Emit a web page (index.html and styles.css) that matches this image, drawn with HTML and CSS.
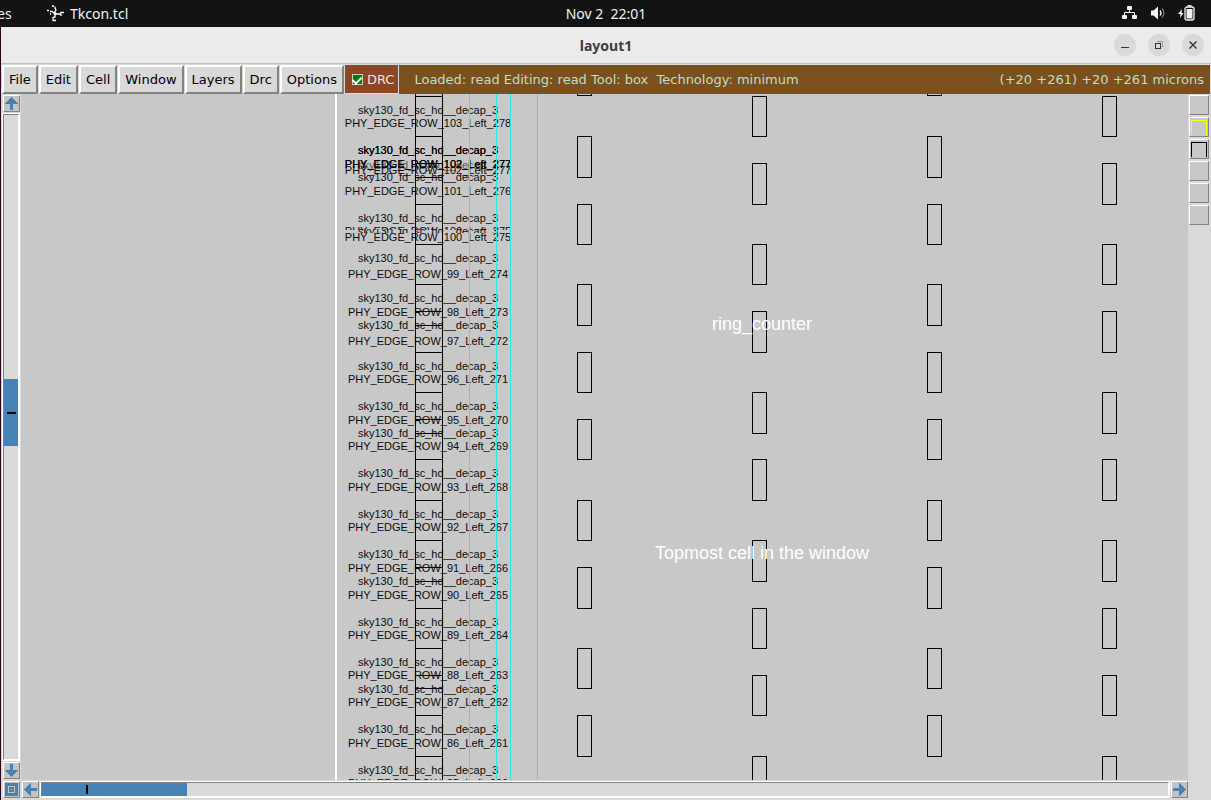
FILE: index.html
```html
<!DOCTYPE html>
<html lang="en">
<head>
<meta charset="utf-8">
<title>layout1</title>
<link rel="stylesheet" href="styles.css">
</head>
<body>
<header class="topbar">
  <nav class="topbar-left">
    <span class="activities">es</span>
    <svg class="app-icon" width="17" height="17" viewBox="0 0 17 17" fill="none" stroke="#fff" stroke-width="1.3"><path d="M0 5.500h2M3 6.500h2l2 1.500M7 8l2-3-1-2V1.500M8 9v3l-2 .5v3h3M9 9h4l1-1.500h3M14 9v2M5 1h2M3 9h1"/><circle cx="8" cy="8.500" r="1.500" fill="#fff" stroke="none"/></svg>
    <span>Tkcon.tcl</span>
  </nav>
  <time class="clock">Nov 2&nbsp; 22:01</time>
  <div class="tray">
    <svg width="16" height="14" viewBox="0 0 16 14"><g fill="#f2f2f2"><rect x="5" y="0" width="5" height="4" rx="1"/><rect x="0" y="9" width="5" height="4" rx="1"/><rect x="10" y="9" width="5" height="4" rx="1"/></g><path d="M7.500 4v3M2.500 9V6.500h10V9" fill="none" stroke="#f2f2f2"/></svg>
    <svg width="16" height="14" viewBox="0 0 16 14"><path d="M1 4.500h2.500L8 .5v13L3.500 9.500H1z" fill="#f2f2f2"/><path d="M10 4.500q2 2.500 0 5" fill="none" stroke="#f2f2f2" stroke-width="1.300"/><path d="M12 2.500q4 4.500 0 9" fill="none" stroke="#777" stroke-width="1.200"/></svg>
    <svg width="17" height="16" viewBox="0 0 17 16"><path d="M4 4L0 9h2.500L2 13l3.500-5H3.500z" fill="#f2f2f2"/><rect x="7" y="2" width="9" height="13" rx="2" fill="none" stroke="#f2f2f2" stroke-width="1.300"/><rect x="8.500" y="4" width="6" height="9.500" fill="#f2f2f2"/><path d="M9.500.8h4" stroke="#f2f2f2" stroke-width="1.500"/></svg>
  </div>
</header>

<main class="window">
  <div class="titlebar">
    <h1 class="title">layout1</h1>
    <div class="win-buttons">
      <button class="win-btn" aria-label="Minimize"><svg width="10" height="10"><path d="M1 7.500h8" stroke="#333"/></svg></button>
      <button class="win-btn" aria-label="Restore"><svg width="10" height="10" fill="none"><path d="M3 1.500h5.500V7" stroke="#999"/><rect x="1.500" y="3.500" width="5" height="5" stroke="#333"/></svg></button>
      <button class="win-btn" aria-label="Close"><svg width="10" height="10"><path d="M1.500 1.500l7 7M8.500 1.500l-7 7" stroke="#333" stroke-width="1.400"/></svg></button>
    </div>
  </div>

  <div class="menubar">
    <button class="menu">File</button>
    <button class="menu">Edit</button>
    <button class="menu">Cell</button>
    <button class="menu">Window</button>
    <button class="menu">Layers</button>
    <button class="menu">Drc</button>
    <button class="menu">Options</button>
    <label class="drc"><input class="drc-box" type="checkbox" checked>DRC</label>
    <div class="status"><span class="message">Loaded: read Editing: read Tool: box&nbsp; Technology: minimum</span><span>(+20 +261) +20 +261 microns</span></div>
  </div>

  <div class="work">
    <div class="vscroll">
      <button class="arrow" aria-label="Scroll up"><svg width="13" height="13" shape-rendering="crispEdges"><path d="M6.500 0L13 7H8v6H5V7H0z"/></svg></button>
      <div class="vtrack"><div class="vthumb"></div></div>
      <button class="arrow" aria-label="Scroll down"><svg width="13" height="13" shape-rendering="crispEdges"><path d="M6.500 13L13 6H8V0H5v6H0z"/></svg></button>
    </div>
    <svg class="canvas" id="canvas" role="img" aria-label="Chip layout"></svg>
    <div class="layers">
      <button class="layer" aria-label="Layer 1"></button>
      <button class="layer" aria-label="Layer 2"><span class="swatch yellow"></span></button>
      <button class="layer" aria-label="Layer 3"><span class="swatch black"></span></button>
      <button class="layer" aria-label="Layer 4"></button>
      <button class="layer" aria-label="Layer 5"></button>
      <button class="layer" aria-label="Layer 6"></button>
    </div>
  </div>

  <div class="hscroll">
    <button class="arrow" aria-label="Full view"><svg width="13" height="13" shape-rendering="crispEdges"><path d="M0 0h13v13H0zM3 3v7h7V3z" fill-rule="evenodd"/><path d="M4 4h5v5H4zM6 6v1h1V6z" fill-rule="evenodd"/></svg></button>
    <button class="arrow" aria-label="Scroll left"><svg width="13" height="13" shape-rendering="crispEdges"><path d="M0 6.500L7 0v5h6v3H7v5z"/></svg></button>
    <div class="htrack"><div class="hthumb"></div></div>
    <button class="arrow" aria-label="Scroll right"><svg width="13" height="13" shape-rendering="crispEdges"><path d="M13 6.500L6 0v5H0v3h6v5z"/></svg></button>
  </div>
</main>
<script src="layout.js"></script>
</body>
</html>
```

FILE: styles.css
```css
* { box-sizing: border-box; }
html, body { height: 100%; }
body {
  margin: 0;
  display: flex;
  flex-direction: column;
  background: #2c001e;
  font-family: "DejaVu Sans", sans-serif;
  overflow: hidden;
}
button { font: inherit; color: inherit; margin: 0; }

.topbar {
  flex: none;
  display: grid;
  grid-template-columns: 1fr auto 1fr;
  align-items: center;
  height: 27px;
  padding: 0 16px 1px 0;
  background: #131313;
  color: #f2f2f2;
  font: 14px "Noto Sans", sans-serif;
}
.topbar-left { display: flex; align-items: center; }
.activities { width: 47px; margin-left: -3px; }
.app-icon { margin: 0 6px 0 3px; }
.clock { padding-left: 17px; }
.tray { display: flex; justify-content: flex-end; align-items: center; gap: 12px; }

.window {
  flex: 1;
  min-height: 0;
  margin-left: 1px;
  display: flex;
  flex-direction: column;
  background: #d9d9d9;
}
.titlebar {
  flex: none;
  display: grid;
  grid-template-columns: 1fr auto 1fr;
  align-items: center;
  height: 37px;
  padding: 0 7px;
  background: #ebebeb;
  border-bottom: 1px solid #bfbfbf;
}
.title {
  grid-column: 2;
  margin: 0;
  font: bold 14px "Noto Sans", sans-serif;
  color: #3d3d3d;
}
.win-buttons { display: flex; justify-content: flex-end; gap: 12px; }
.win-btn {
  display: flex;
  align-items: center;
  justify-content: center;
  width: 22px;
  height: 22px;
  padding: 0;
  border: 0;
  border-radius: 50%;
  background: #d9d9d9;
}

.menubar {
  flex: none;
  display: flex;
  height: 30px;
  padding: 1px 1px 0;
  font-size: 13px;
}
.menu {
  height: 29px;
  margin-right: 1px;
  padding: 0 5px;
  border: 2px solid;
  border-color: #fff #828282 #828282 #fff;
  background: #d9d9d9;
  color: #000;
  white-space: nowrap;
}
.drc {
  display: flex;
  align-items: center;
  gap: 4px;
  padding: 0 4px 0 7px;
  border: 1px solid #d9d9d9;
  border-width: 0 1px 1px 0;
  background: #8b4726;
  color: #e6e6dc;
}
.drc-box {
  appearance: none;
  display: grid;
  place-items: center;
  width: 11px;
  height: 11px;
  margin: 0;
  border: 1px solid #cfc7b8;
  background: #008000;
}
.drc-box::after {
  content: "";
  width: 4px;
  height: 7px;
  margin-bottom: 2px;
  border: solid #fff;
  border-width: 0 2px 2px 0;
  transform: rotate(45deg);
}
.status {
  flex: 1;
  display: flex;
  align-items: center;
  justify-content: space-between;
  padding: 0 6px 0 15px;
  background: #7a501c;
  color: #c3dcc8;
  white-space: nowrap;
}

.work { flex: 1; min-height: 0; display: flex; }
.vscroll {
  flex: none;
  display: flex;
  flex-direction: column;
  width: 20px;
  padding: 1px 0 1px 2px;
}
.arrow {
  flex: none;
  display: block;
  width: 17px;
  height: 17px;
  padding: 0;
  border: 1px solid;
  border-color: #fff #828282 #828282 #fff;
  background: #c3c3c3;
  line-height: 0;
}
.arrow svg { margin: 1px; fill: #4682b4; }
.vtrack {
  flex: 1;
  display: flex;
  flex-direction: column;
  width: 16px;
  margin: 2px 0;
  border: 1px solid;
  border-color: #828282 #fff #fff #828282;
  outline: 1px solid #fff;
}
.vtrack::before { content: ""; flex: 264; }
.vtrack::after { content: ""; flex: 313; }
.vthumb {
  flex: 67;
  display: flex;
  align-items: center;
  justify-content: center;
  background: #4682b4;
}
.vthumb::after { content: ""; width: 9px; height: 2px; background: #000; }
.canvas {
  flex: 1;
  min-width: 0;
  height: 100%;
  background: #c8c8c8;
  overflow: hidden;
}
.cells { fill: none; stroke: #000; shape-rendering: crispEdges; }
.rails { fill: none; stroke: #28e8e0; shape-rendering: crispEdges; }
.boundary { stroke: #fff; stroke-width: 2px; shape-rendering: crispEdges; }
.cell-text {
  fill: #0c0c0c;
  font: 11px "Liberation Sans", sans-serif;
  text-anchor: middle;
}
.strong { fill: #000; }
.faint { opacity: 0.6; }
.cell-title {
  fill: #fff;
  font: 18px "Liberation Sans", sans-serif;
  text-anchor: middle;
}

.layers {
  flex: none;
  display: flex;
  flex-direction: column;
  gap: 2px;
  width: 23px;
  padding: 1px 1px 0;
}
.layer {
  display: flex;
  width: 20px;
  height: 20px;
  padding: 2px 1px 1px;
  border: 1px solid;
  border-color: #fff #828282 #828282 #fff;
  background: #c8c8c8;
}
.swatch { flex: 1; align-self: stretch; border: 1px solid; border-bottom: 0; }
.yellow { border-color: #ff0; }
.black { border-color: #000; }

.hscroll {
  flex: none;
  display: flex;
  gap: 2px;
  height: 20px;
  padding: 1px 23px 0 2px;
}
.htrack {
  flex: 1;
  display: flex;
  height: 15px;
  margin-top: 1px;
  border: 1px solid;
  border-color: #828282 #fff #fff #828282;
  outline: 1px solid #fff;
}
.hthumb {
  flex: 145;
  display: flex;
  align-items: center;
  background: #4682b4;
}
.hthumb::after { content: ""; width: 2px; height: 9px; margin-left: 44px; background: #000; }
.htrack::after { content: ""; flex: 982; }
```

FILE: layout.js
```js
const NS = "http://www.w3.org/2000/svg";
const canvas = document.getElementById("canvas");

function add(parent, tag, attrs, text) {
  const node = document.createElementNS(NS, tag);
  for (const key in attrs) node.setAttribute(key, attrs[key]);
  if (text) node.textContent = text;
  parent.appendChild(node);
  return node;
}

// Cell edges, measured from the top of the canvas.
const edges = [2, 42, 69, 83, 110, 150, 190, 217, 231, 258, 298, 325, 339, 365, 406, 446, 473, 487, 514, 554, 581, 594, 621, 662];
const rowBaselines = [33, 101, 147, 184, 222, 251, 289, 330, 356, 397, 437, 478, 505, 545, 585, 612, 653, 693];
const cellBaselines = [20, 87, 128, 168, 208, 235, 276, 316, 343, 383, 424, 464, 491, 532, 572, 599, 639, 680];
const tapsA = [[-39, 1], [42, 83], [110, 150], [190, 231], [258, 298], [325, 365], [406, 446], [473, 514], [554, 594], [621, 662]];
const tapsB = [[2, 42], [69, 110], [150, 190], [217, 258], [298, 339], [365, 406], [446, 487], [514, 554], [581, 621], [662, 702]];
const CELL = "sky130_fd_sc_hd__decap_3";

const defs = add(canvas, "defs", {});
const clip = add(defs, "clipPath", { id: "sliver" });
add(clip, "rect", { x: 316, y: 133, width: 190, height: 3 });
const clipLow = add(defs, "clipPath", { id: "sliver-low" });
add(clipLow, "rect", { x: 316, y: 135, width: 190, height: 4 });

add(canvas, "path", { class: "boundary", d: "M315 0V2000" });

let outline = "M394.5 0V2000M421.5 0V2000";
for (const y of edges) outline += `M394.5 ${y + 0.5}H422`;
for (const x of [556, 731, 906, 1081]) {
  const taps = x === 556 || x === 906 ? tapsA : tapsB;
  for (const [top, bottom] of taps) outline += `M${x + 0.5} ${top + 0.5}h14V${bottom + 0.5}h-14z`;
}
add(canvas, "path", { class: "cells", d: outline });

for (const y of cellBaselines) add(canvas, "text", { class: "cell-text", x: 407, y }, CELL);
add(canvas, "text", { class: "cell-text strong", x: 407, y: 60 }, CELL);
add(canvas, "text", { class: "cell-text strong", x: 407, y: 60 }, CELL);
add(canvas, "text", { class: "cell-text faint", x: 407, y: 75 }, CELL);
add(canvas, "text", { class: "cell-text", x: 407, y: 141, "clip-path": "url(#sliver-low)" }, CELL);

const rowName = (row) => `PHY_EDGE_ROW_${row}_Left_${row + 175}`;
const rows = [103, 101, 100, 99, 98, 97, 96, 95, 94, 93, 92, 91, 90, 89, 88, 87, 86, 85];
rows.forEach((row, i) => add(canvas, "text", { class: "cell-text", x: 407, y: rowBaselines[i] }, rowName(row)));
add(canvas, "text", { class: "cell-text strong", x: 407, y: 74 }, rowName(102));
add(canvas, "text", { class: "cell-text strong", x: 407, y: 74 }, rowName(102));
add(canvas, "text", { class: "cell-text", x: 407, y: 80 }, rowName(102));
add(canvas, "text", { class: "cell-text", x: 407, y: 141, "clip-path": "url(#sliver)" }, rowName(100));

add(canvas, "path", { class: "rails", d: "M448.5 0V2000M475.5 0V2000M489.5 0V2000M516.5 0V2000" });

add(canvas, "text", { class: "cell-title", x: 741, y: 236 }, "ring_counter");
add(canvas, "text", { class: "cell-title", x: 741, y: 465 }, "Topmost cell in the window");
```
